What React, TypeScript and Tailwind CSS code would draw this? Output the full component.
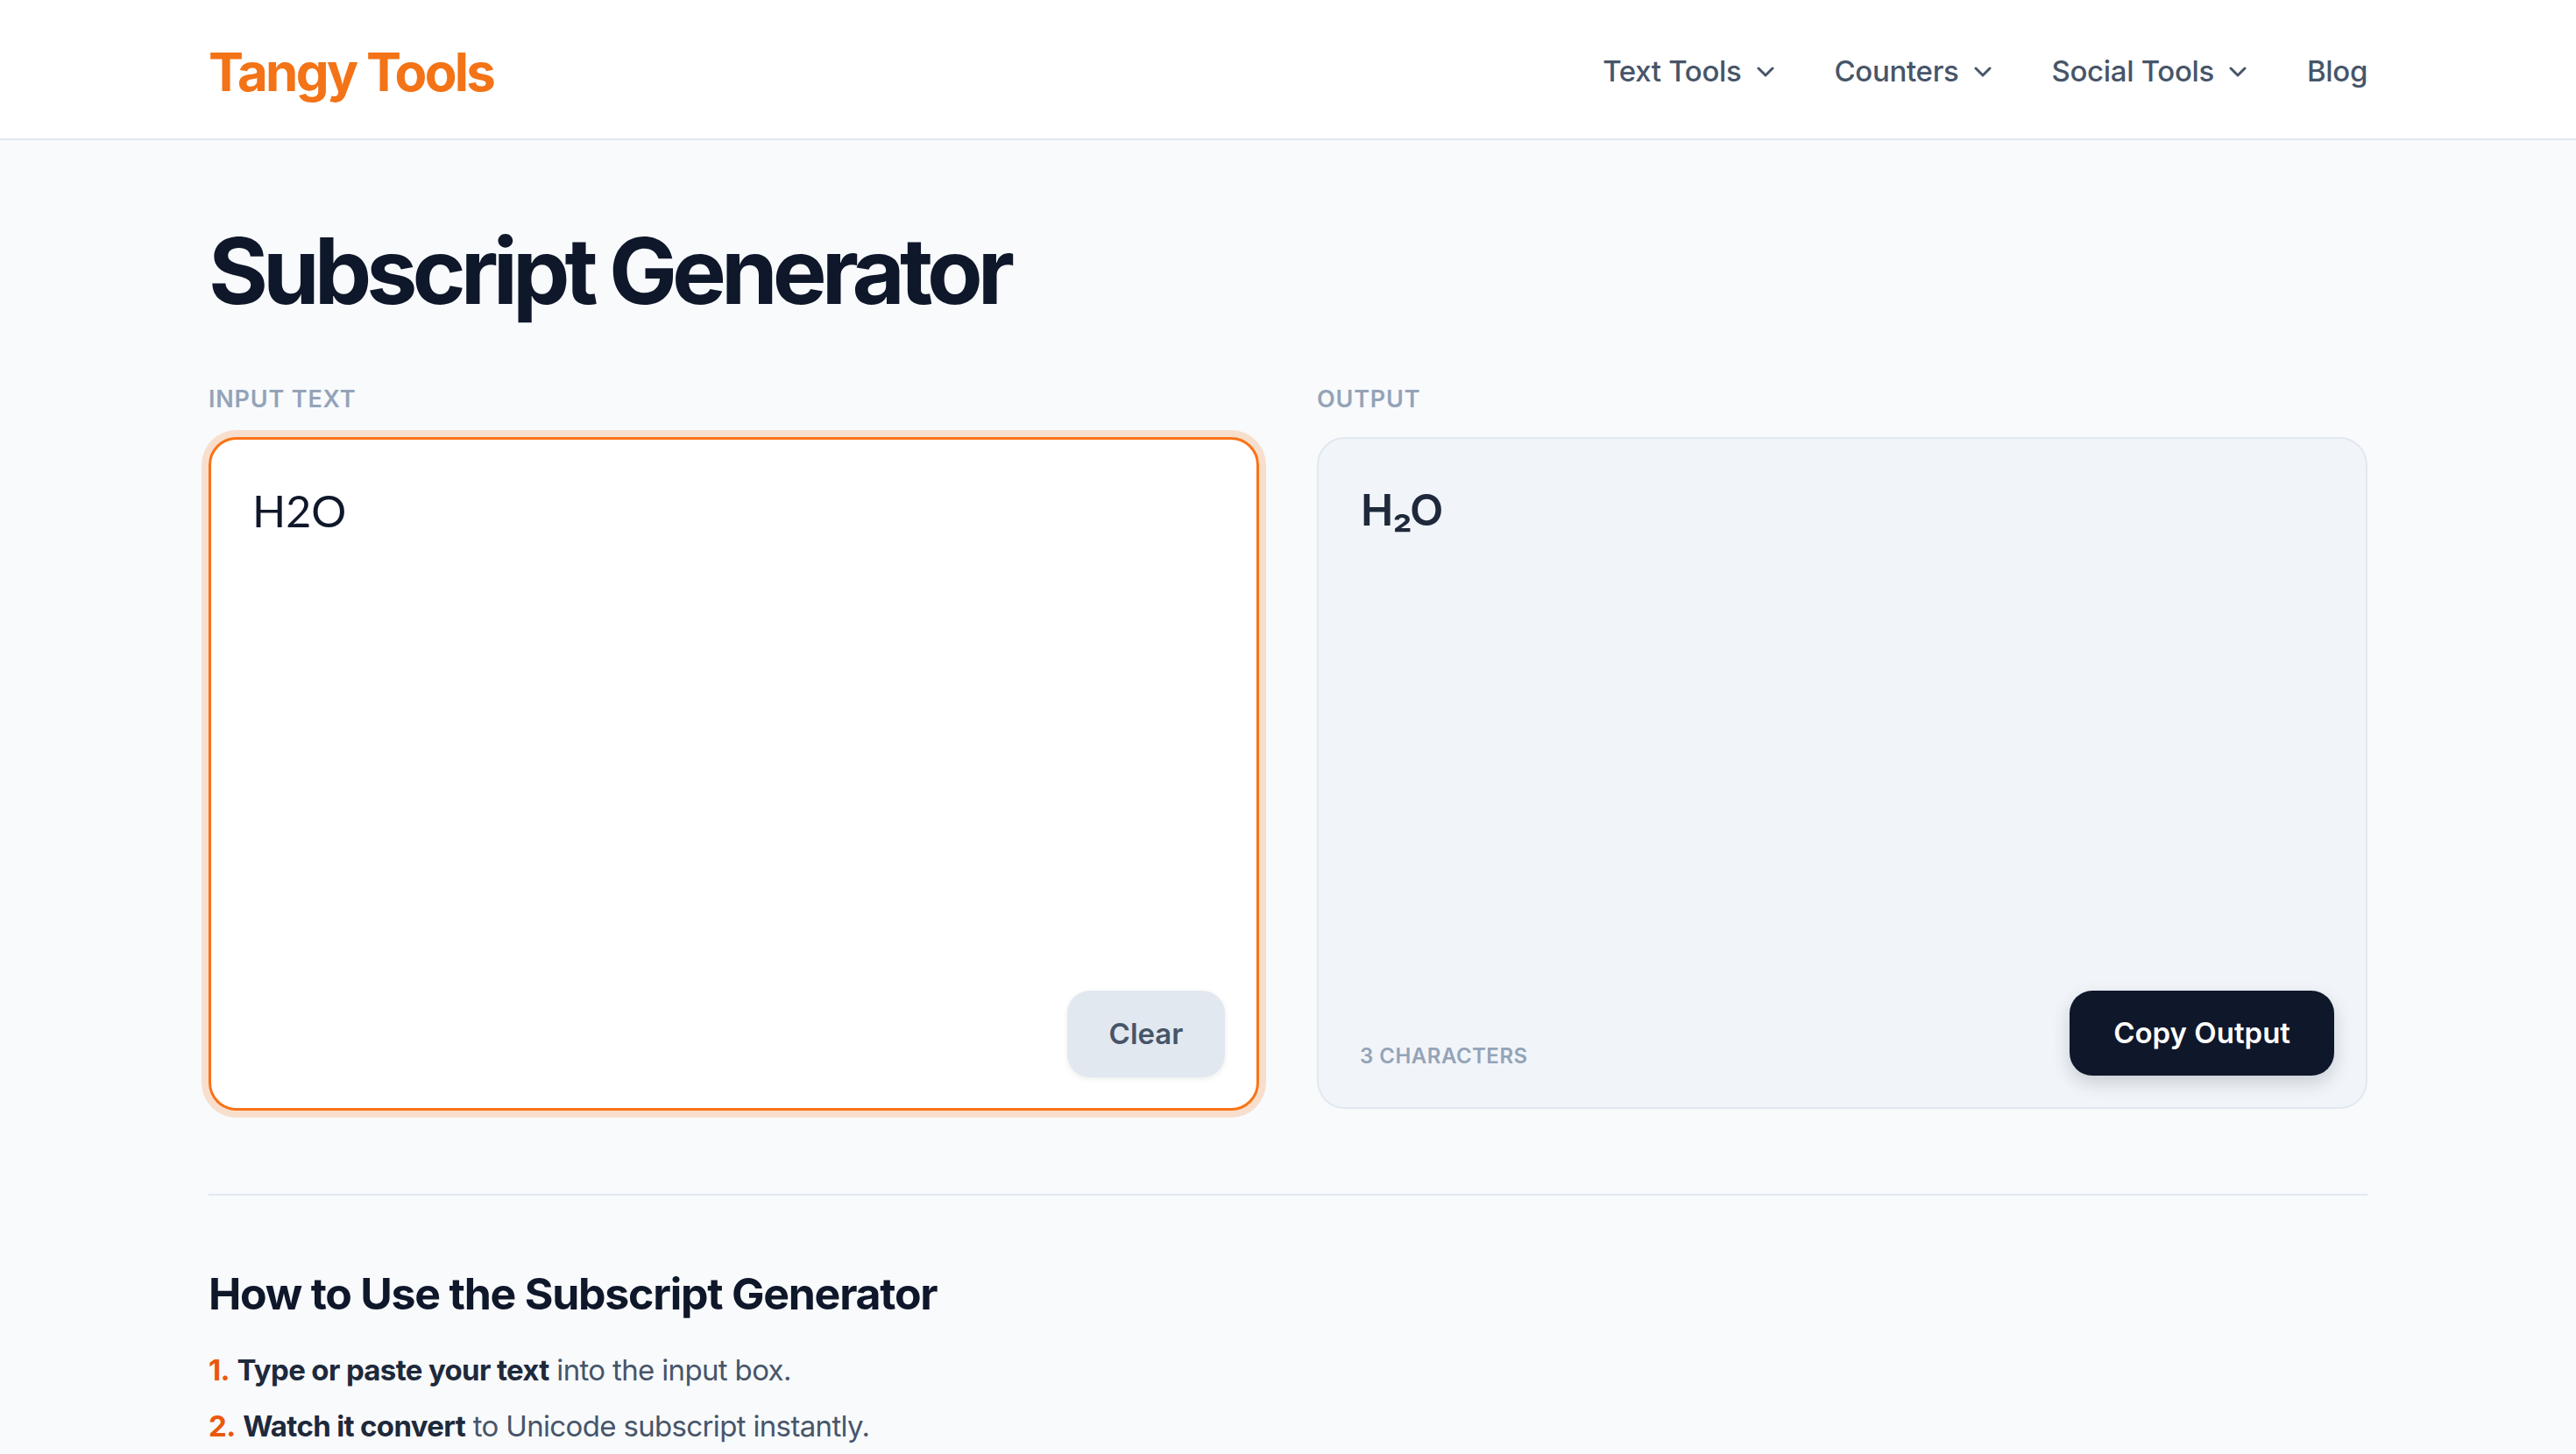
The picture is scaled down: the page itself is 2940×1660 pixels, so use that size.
import React, { useState } from 'react'

const SUB: Record<string, string> = {
    '0': '₀', '1': '₁', '2': '₂', '3': '₃', '4': '₄', '5': '₅', '6': '₆', '7': '₇', '8': '₈', '9': '₉',
    '+': '₊', '-': '₋', '=': '₌', '(': '₍', ')': '₎',
}

const toSubscript = (s: string) => s.split('').map((c) => SUB[c] ?? c).join('')

const Chevron = () => (
    <svg width="20" height="12" viewBox="0 0 20 12" fill="none" className="text-[#475569]">
        <polyline points="2,2 10,10 18,2" stroke="currentColor" strokeWidth="3" strokeLinecap="round" strokeLinejoin="round" />
    </svg>
)

const NavItem = ({ label, menu = true }: { label: string; menu?: boolean }) => (
    <a href="#" className="flex items-center gap-[17px] text-[33px] font-medium text-[#475569] tracking-[-0.01em]">
        <span>{label}</span>
        {menu && <Chevron />}
    </a>
)

const Header = () => (
    <header className="h-[160px] bg-white border-b-2 border-[#e2e8f0]">
        <div className="flex h-full items-center justify-between px-[238px] pt-[5px]">
            <a href="#" className="text-[60px] font-bold tracking-[-0.045em] text-[#f37316] leading-none">
                Tangy Tools
            </a>
            <nav className="flex items-center gap-[69px]">
                <NavItem label="Text Tools" />
                <NavItem label="Counters" />
                <NavItem label="Social Tools" />
                <NavItem label="Blog" menu={false} />
            </nav>
        </div>
    </header>
)

export default function App() {
    const [text, setText] = useState('H2O')
    const output = toSubscript(text)

    return (
        <div className="min-h-screen bg-[#f8fafc] font-[Inter,sans-serif]">
            <Header />
            <main className="px-[238px] pt-[97px] pb-[80px]">
                <h1 className="text-[104px] font-bold leading-none tracking-[-0.058em] text-[#0f172a]">Subscript Generator</h1>

                <div className="mt-[75px] grid grid-cols-2 gap-[66px]">
                    <div>
                        <div className="mb-[24px] text-[27px] leading-[39px] font-semibold uppercase tracking-[0.03em] text-[#94a3b8]">
                            Input Text
                        </div>
                        <div className="relative h-[769px] rounded-[32px] border-[3px] border-[#f97316] bg-white shadow-[0_0_0_8px_rgba(249,115,22,0.2)]">
                            <textarea
                                value={text}
                                onChange={(e) => setText(e.target.value)}
                                className="h-full w-full resize-none rounded-[30px] bg-transparent pt-[44px] px-[47px] text-[50px] leading-[75px] text-[#0f172a] outline-none font-[Lato,sans-serif]"
                            />
                            <button
                                onClick={() => setText('')}
                                className="absolute bottom-[35px] right-[36px] h-[99px] w-[180px] rounded-[26px] bg-[#e2e8f0] text-[33px] font-semibold text-[#475569] shadow-[0_2px_6px_rgba(15,23,42,0.08)]"
                            >
                                Clear
                            </button>
                        </div>
                    </div>

                    <div>
                        <div className="mb-[24px] text-[27px] leading-[39px] font-semibold uppercase tracking-[0.03em] text-[#94a3b8]">
                            Output
                        </div>
                        <div className="flex h-[767px] flex-col rounded-[32px] border-2 border-[#e2e8f0] bg-[#f1f5f9] pt-[44px] px-[36px] pb-[36px]">
                            <div className="pl-[12px] text-[50px] leading-[75px] font-semibold tracking-[-0.02em] text-[#1e293b]">{output}</div>
                            <div className="flex-1" />
                            <div className="flex items-end justify-between">
                                <span className="pl-[11px] pb-[4px] text-[24px] leading-[36px] font-semibold uppercase tracking-[0.02em] text-[#94a3b8]">
                                    {text.length} Characters
                                </span>
                                <button className="h-[97px] rounded-[26px] bg-[#0f172a] px-[50px] text-[33px] font-semibold text-white shadow-[0_8px_20px_rgba(15,23,42,0.18)]">
                                    Copy Output
                                </button>
                            </div>
                        </div>
                    </div>
                </div>

                <hr className="mt-[95px] border-0 border-t-2 border-[#e2e8f0]" />

                <section className="mt-[82px]">
                    <h2 className="text-[50px] leading-[60px] font-bold tracking-[-0.025em] text-[#0f172a]">
                        How to Use the Subscript Generator
                    </h2>
                    <ol className="mt-[25px] text-[33px] leading-[64px] tracking-[-0.02em] text-[#475569]">
                        <li>
                            <span className="font-bold text-[#ea580c]">1.</span>{' '}
                            <strong className="font-bold text-[#1e293b]">Type or paste your text</strong> into the input box.
                        </li>
                        <li>
                            <span className="font-bold text-[#ea580c]">2.</span>{' '}
                            <strong className="font-bold text-[#1e293b]">Watch it convert</strong> to Unicode subscript instantly.
                        </li>
                    </ol>
                </section>
            </main>
        </div>
    )
}
